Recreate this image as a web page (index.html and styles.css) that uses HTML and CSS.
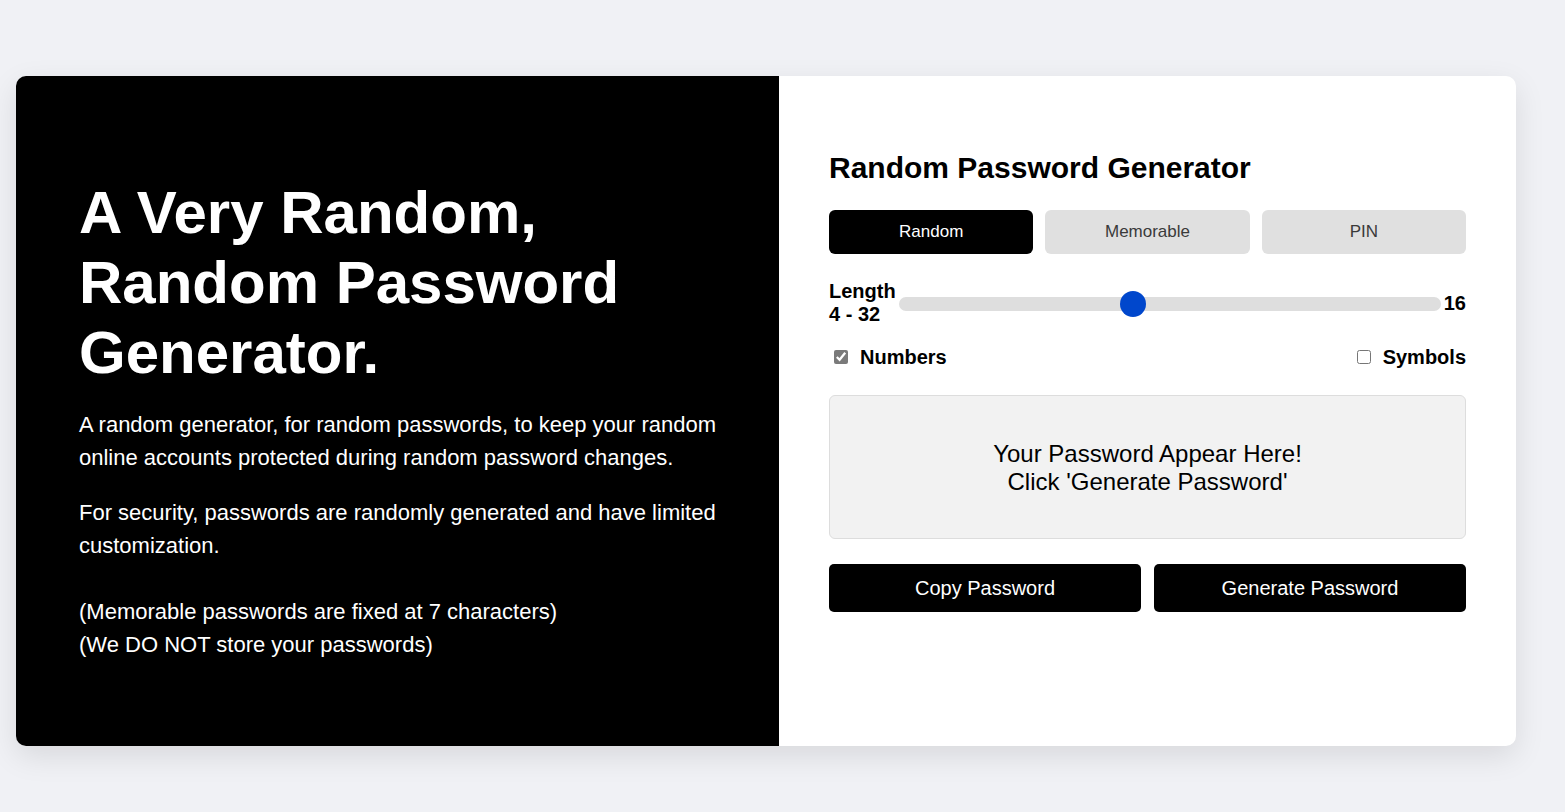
FILE: index.html
```html
<!DOCTYPE html>
<html lang="en">
<head>
<meta charset="utf-8">
<title>Random Password Generator</title>
<link rel="stylesheet" href="styles.css">
</head>
<body>
<main class="card">
  <section class="intro">
    <h1 class="intro-title">A Very Random, Random Password Generator.</h1>
    <p class="intro-text">A random generator, for random passwords, to keep your random online accounts protected during random password changes.</p>
    <p class="intro-text">For security, passwords are randomly generated and have limited customization.</p>
    <p class="intro-text intro-note">(Memorable passwords are fixed at 7 characters)<br>(We DO NOT store your passwords)</p>
  </section>
  <section class="generator">
    <h2 class="gen-title">Random Password Generator</h2>
    <div class="tabs">
      <button class="tab tab-active">Random</button>
      <button class="tab">Memorable</button>
      <button class="tab">PIN</button>
    </div>
    <div class="length-row">
      <label class="length-label" for="len">Length<br>4 - 32</label>
      <input class="slider" id="len" type="range" min="4" max="32" value="16">
      <span class="length-value">16</span>
    </div>
    <div class="options">
      <label class="option"><input type="checkbox" class="check" checked>Numbers</label>
      <label class="option"><input type="checkbox" class="check">Symbols</label>
    </div>
    <div class="output">Your Password Appear Here!<br>Click 'Generate Password'</div>
    <div class="actions">
      <button class="action">Copy Password</button>
      <button class="action">Generate Password</button>
    </div>
  </section>
</main>
</body>
</html>
```
FILE: styles.css
```css
* { box-sizing: border-box; }

html, body { height: 100%; }

body {
  margin: 0;
  background: #f0f1f5;
  font-family: "Liberation Sans", Arial, sans-serif;
  padding: 76px 49px 66px 16px;
}

.card {
  display: flex;
  width: 1500px;
  height: 670px;
  border-radius: 10px;
  overflow: hidden;
  box-shadow: 0 10px 30px rgba(0, 0, 0, 0.1);
  background: #fff;
}

.intro {
  width: 763px;
  background: #000;
  color: #fff;
  padding: 16px 50px 0 63px;
  display: flex;
  flex-direction: column;
  justify-content: center;
}

.intro-title {
  margin: 0 0 20px;
  font-size: 60px;
  line-height: 70px;
  font-weight: 700;
}

.intro-text {
  margin: 0 0 22px;
  font-size: 22px;
  line-height: 33px;
}

.intro-note {
  margin-top: 11px;
  margin-bottom: 0;
}

.generator {
  flex: 1;
  padding: 75px 50px 50px;
  display: flex;
  flex-direction: column;
}

.gen-title {
  margin: 0 0 25px;
  font-size: 30px;
  line-height: 34px;
  font-weight: 700;
  color: #000;
}

.tabs {
  display: grid;
  grid-template-columns: repeat(3, 1fr);
  gap: 12px;
  margin-bottom: 26px;
}

.tab {
  height: 44px;
  border: 0;
  border-radius: 6px;
  background: #e0e0e0;
  color: #3a3a3a;
  font-family: "Liberation Sans", Arial, sans-serif;
  font-size: 17px;
}

.tab-active {
  background: #000;
  color: #fff;
}

.length-row {
  display: flex;
  align-items: center;
  margin-bottom: 20px;
}

.length-label {
  font-size: 20px;
  line-height: 23px;
  font-weight: 700;
  white-space: nowrap;
}

.slider {
  -webkit-appearance: none;
  appearance: none;
  flex: 1;
  height: 14px;
  margin: 2px 3px 0 3px;
  border-radius: 7px;
  background: #dedede;
  outline: none;
}

.slider::-webkit-slider-thumb {
  -webkit-appearance: none;
  appearance: none;
  width: 26px;
  height: 26px;
  border-radius: 50%;
  background: #0047cc;
  border: 0;
}

.length-value {
  font-size: 20px;
  font-weight: 700;
}

.options {
  display: flex;
  justify-content: space-between;
  align-items: center;
  margin-bottom: 27px;
}

.option {
  display: flex;
  align-items: center;
  font-size: 20px;
  line-height: 22px;
  font-weight: 700;
}

.check {
  margin: 0 12px 0 5px;
  width: 14px;
  height: 14px;
  accent-color: #7a7a7a;
}

.output {
  height: 144px;
  background: #f2f2f2;
  border: 1px solid #dddddd;
  border-radius: 6px;
  display: flex;
  align-items: center;
  justify-content: center;
  text-align: center;
  font-size: 24px;
  line-height: 28px;
  color: #000;
  margin-bottom: 25px;
  padding-top: 2px;
}

.actions {
  display: grid;
  grid-template-columns: 1fr 1fr;
  gap: 13px;
}

.action {
  height: 48px;
  border: 0;
  border-radius: 5px;
  background: #000;
  color: #fff;
  font-family: "Liberation Sans", Arial, sans-serif;
  font-size: 20px;
}
```
